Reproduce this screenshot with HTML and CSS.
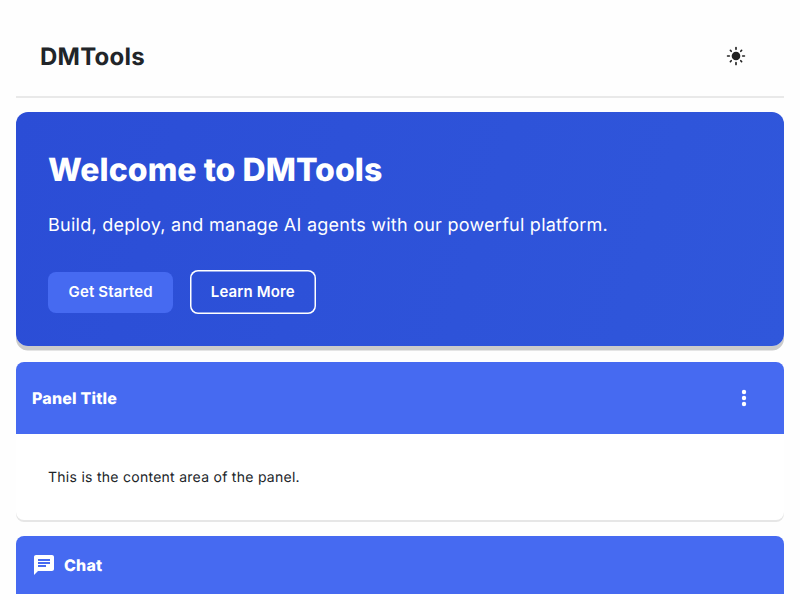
FILE: index.html
```html
<!DOCTYPE html>
<html lang="en">
<head>
<meta charset="utf-8">
<title>DMTools</title>
<link rel="stylesheet" href="styles.css">
</head>
<body>
<header class="topbar">
  <span class="brand">DMTools</span>
  <button class="icon-button" aria-label="Toggle theme">
    <svg width="20" height="20" viewBox="0 0 24 24" fill="currentColor"><circle cx="12" cy="12" r="5.2"/><path d="M1.9 12h2.1M20 12h2.1M12 1.9v2.1M12 20v2.1M5.3 5.3l1 1M17.7 17.7l1 1M18.7 5.3l-1 1M6.3 17.7l-1 1" stroke="currentColor" stroke-width="2" stroke-linecap="round"/></svg>
  </button>
</header>
<main class="content">
  <section class="hero">
    <h1 class="hero-title">Welcome to DMTools</h1>
    <p class="hero-text">Build, deploy, and manage AI agents with our powerful platform.</p>
    <div class="actions">
      <button class="button button-primary">Get Started</button>
      <button class="button button-outline">Learn More</button>
    </div>
  </section>
  <section class="panel">
    <div class="panel-header">
      <h2 class="panel-title">Panel Title</h2>
      <button class="icon-button panel-menu" aria-label="More options">
        <svg width="24" height="24" viewBox="0 0 24 24" fill="currentColor"><circle cx="12" cy="6" r="2.2"/><circle cx="12" cy="12" r="2.2"/><circle cx="12" cy="18" r="2.2"/></svg>
      </button>
    </div>
    <p class="panel-body">This is the content area of the panel.</p>
  </section>
  <section class="panel chat">
    <div class="panel-header chat-header">
      <svg width="24" height="24" viewBox="0 0 24 24" fill="currentColor"><path d="M20 2H4c-1.1 0-1.99.9-1.99 2L2 22l4-4h14c1.1 0 2-.9 2-2V4c0-1.1-.9-2-2-2zM6 9h12v2H6V9zm8 5H6v-2h8v2zm4-6H6V6h12v2z"/></svg>
      <h2 class="panel-title">Chat</h2>
    </div>
  </section>
</main>
</body>
</html>
```
FILE: styles.css
```css
* { box-sizing: border-box; margin: 0; }

body {
  display: flex;
  flex-direction: column;
  height: 600px;
  overflow: hidden;
  padding: 16px 16px 0;
  background: #fefefe;
  color: #212529;
  font-family: Inter, "Liberation Sans", sans-serif;
  text-rendering: geometricPrecision;
}

button { font: inherit; border: 0; padding: 0; }

svg { display: block; flex: none; }

.topbar {
  display: flex;
  flex: none;
  align-items: center;
  justify-content: space-between;
  height: 82px;
  padding: 0 24px;
  border-bottom: 2px solid #e9e9e9;
}

.brand {
  padding-top: 2px;
  font-size: 24px;
  font-weight: 700;
  line-height: 32px;
  letter-spacing: 0.25px;
}

.icon-button {
  display: grid;
  place-items: center;
  width: 48px;
  height: 48px;
  background: none;
  color: #212121;
}

.content {
  display: flex;
  flex: 1;
  flex-direction: column;
  gap: 16px;
  padding-top: 14px;
}

.hero {
  flex: none;
  height: 234.4px;
  padding: 32px;
  border-radius: 12px;
  background: linear-gradient(107deg, #2b4dd6, #3057db);
  box-shadow: 0 4.6px 0 #cbcbcb;
  color: #fff;
}

.hero-title {
  font-size: 32px;
  font-weight: 800;
  line-height: 51px;
  letter-spacing: 0.04px;
}

.hero-text {
  margin-top: 17px;
  font-size: 18px;
  line-height: 27px;
  letter-spacing: 0.25px;
}

.actions {
  display: flex;
  align-items: center;
  gap: 16px;
  margin-top: 31px;
}

.button {
  height: 41px;
  padding-bottom: 2px;
  border-radius: 8px;
  color: #fff;
  font-size: 15px;
  font-weight: 600;
  letter-spacing: 0.15px;
}

.button-primary {
  width: 125.4px;
  background: #466af1;
}

.button-outline {
  width: 126.1px;
  height: 44px;
  margin-left: 0.4px;
  box-shadow: inset 0 0 0 1.5px #fff;
  background: none;
}

.panel {
  flex: none;
  border-radius: 8px;
  background: #fff;
  box-shadow: 0 2px 0 #e6e6e6;
}

.panel-header {
  display: flex;
  align-items: center;
  justify-content: space-between;
  height: 72px;
  padding: 0 16px;
  border-radius: 8px 8px 0 0;
  background: #466af1;
  color: #fff;
}

.panel-title {
  font-size: 16px;
  font-weight: 800;
  letter-spacing: 0.18px;
}

.panel-menu { color: #fff; }

.panel-body {
  padding: 33px 32px 31px;
  font-size: 14px;
  line-height: 22px;
  letter-spacing: 0.27px;
}

.chat {
  flex: 1;
  border-radius: 8px 8px 0 0;
}

.chat-header {
  justify-content: flex-start;
  gap: 8px;
  height: 58px;
}
```
